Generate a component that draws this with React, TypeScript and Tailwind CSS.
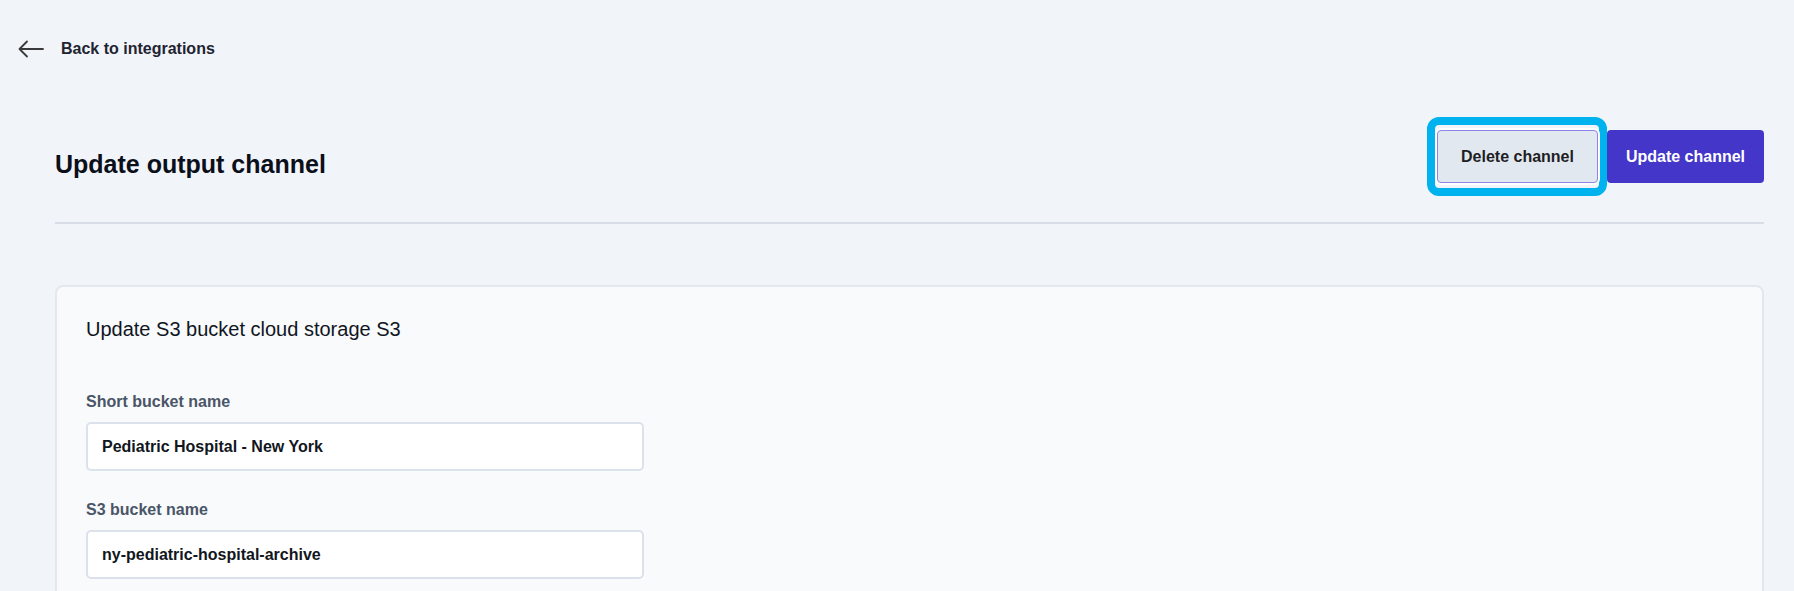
import React from "react";

export default function App() {
  return (
    <div className="h-[591px] overflow-hidden bg-[#f1f4f9] font-['Liberation_Sans',Arial,sans-serif]">
      {/* Back link */}
      <div className="flex items-center pt-[37px] pl-[18px] gap-[17px]">
        <svg width="26" height="18" viewBox="0 0 26 18" fill="none" className="shrink-0">
          <path d="M25 9H1.5M9 1.5L1.5 9L9 16.5" stroke="#3a3a3a" strokeWidth="1.8" strokeLinecap="round" strokeLinejoin="round" />
        </svg>
        <span className="text-[16px] leading-[24px] font-bold text-[#1f2430]">Back to integrations</span>
      </div>

      <div className="pl-[55px] pr-[30px]">
        {/* Header */}
        <div className="mt-[69px] flex items-start justify-between">
          <h1 className="mt-[19px] text-[25px] leading-[30px] font-bold text-[#0b0f1a]">Update output channel</h1>
          <div className="flex items-center gap-[9px]">
            <div className="relative">
              <div className="pointer-events-none absolute -top-[13px] -bottom-[13px] -left-[10px] -right-[9px] rounded-[12px] border-[8px] border-[#00b2ee]" />
              <button className="relative h-[53px] w-[161px] rounded-[4px] border border-[#8f84ea] bg-[#e2e8f0] text-[16px] font-bold text-[#1e1f24] shadow-[0_0_0_2px_#ffffff]">
                Delete channel
              </button>
            </div>
            <button className="h-[53px] w-[157px] rounded-[4px] bg-[#4436c9] text-[16px] font-bold text-white">
              Update channel
            </button>
          </div>
        </div>

        {/* Divider */}
        <div className="mt-[39px] h-[2px] bg-[#d7dee7]" />

        {/* Card */}
        <div className="mt-[61px] rounded-[8px] border-2 border-[#e3e8ef] bg-[#f8fafc] px-[29px] pt-[28px] pb-[80px]">
          <h2 className="text-[20px] leading-[28px] font-normal text-[#111522]">Update S3 bucket cloud storage S3</h2>

          <div className="mt-[47px] flex flex-col">
            <label className="text-[16px] leading-[24px] font-bold text-[#4a5567]">Short bucket name</label>
            <input
              readOnly
              defaultValue="Pediatric Hospital - New York"
              className="mt-[8px] h-[49px] w-[558px] rounded-[5px] border-2 border-[#dbe2ec] bg-white px-[14px] text-[16px] font-bold text-[#121620] outline-none"
            />
          </div>

          <div className="mt-[27px] flex flex-col">
            <label className="text-[16px] leading-[24px] font-bold text-[#4a5567]">S3 bucket name</label>
            <input
              readOnly
              defaultValue="ny-pediatric-hospital-archive"
              className="mt-[8px] h-[49px] w-[558px] rounded-[5px] border-2 border-[#dbe2ec] bg-white px-[14px] text-[16px] font-bold text-[#121620] outline-none"
            />
          </div>
        </div>
      </div>
    </div>
  );
}
